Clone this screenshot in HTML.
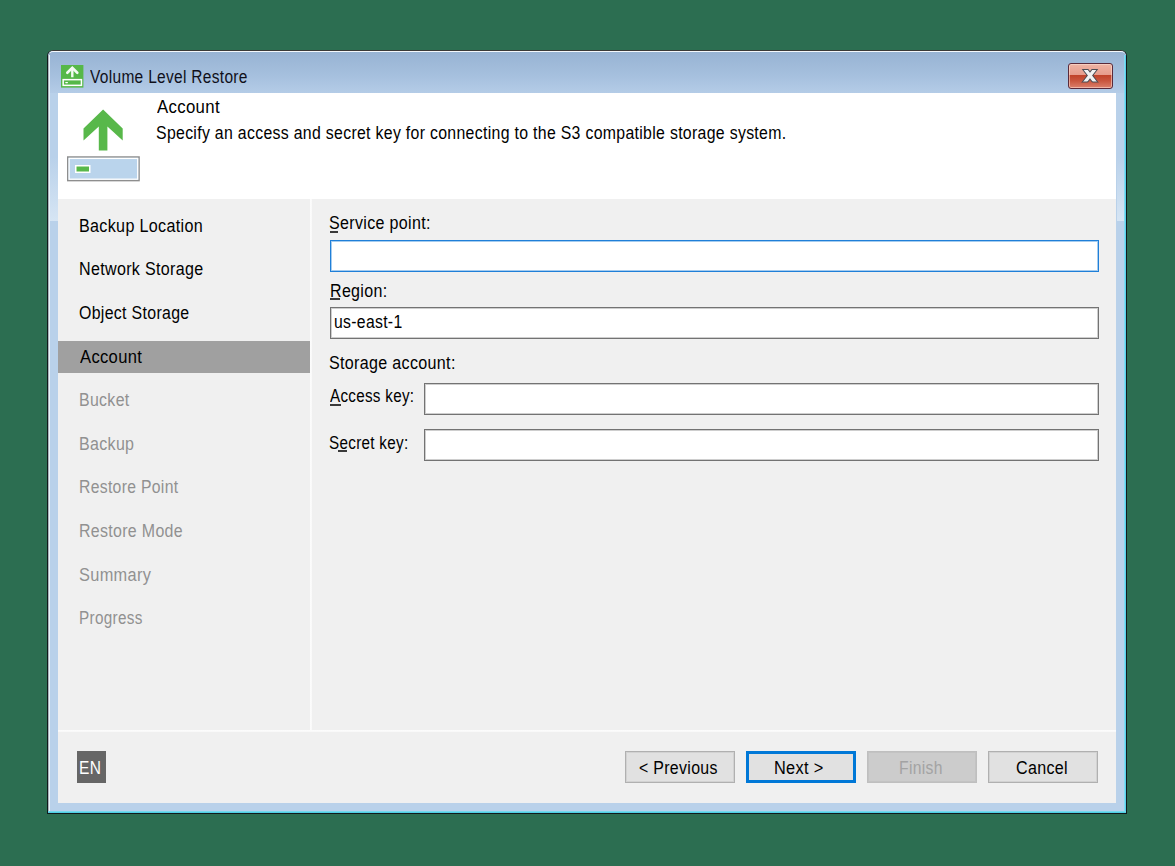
<!DOCTYPE html>
<html><head><meta charset="utf-8">
<style>
*{margin:0;padding:0;box-sizing:border-box}
html,body{width:1175px;height:866px;overflow:hidden;background:#2c6e51;font-family:"Liberation Sans",sans-serif;}
.a{position:absolute}
.t{position:absolute;font-size:17.5px;line-height:20px;white-space:nowrap;color:#000;transform-origin:0 0;letter-spacing:0.35px}
.g{color:#8c8c8c}
#win{left:47px;top:50px;width:1080px;height:764px;border:1px solid #121a1c;border-top-color:#3a3a38;border-radius:6px 6px 0 0;background:#b9d1ea;overflow:hidden}
#hl{left:0;top:0;width:1078px;height:762px;border:1px solid #f4f8fc;border-left-color:#a9b4bc;border-right:none;border-bottom:none;border-radius:5px 5px 0 0}
#hl2{left:1px;top:4px;width:1px;height:758px;background:#eef4fb}
#tb{left:0;top:0;width:1078px;height:42px;background:linear-gradient(#97b3d3,#a6c0de 60%,#b4cce7)}
#content{left:10px;top:42px;width:1058px;height:710px;background:#f0f0f0;overflow:hidden}
#hdr{left:0;top:0;width:1058px;height:106px;background:#fff}
#cyan{left:1076px;top:4px;width:2px;height:758px;background:linear-gradient(90deg,#9fdcf2,#3fd0ea)}
#cyanb{left:0;top:760px;width:1078px;height:2px;background:linear-gradient(#8adcf0,#3ccce0)}
.inp{position:absolute;background:#fff;border:1px solid #737373;box-shadow:inset 0 0 0 1px rgba(115,115,115,0.35)}
.btn{position:absolute;top:658px;width:110px;height:32px;background:#e1e1e1;border:1px solid #b0b0b0;box-shadow:inset 0 0 0 1px rgba(176,176,176,0.3);text-align:center;font-size:16.5px;line-height:30px;color:#000}
</style></head><body>
<div id="win" class="a">
  <div id="tb" class="a"></div>
  <div id="hl" class="a"></div><div id="hl2" class="a"></div>
  <div class="a" style="left:2px;top:106px;width:8px;height:64px;background:linear-gradient(#b9d1ea,#d6e5f4)"></div><div class="a" style="left:1069px;top:106px;width:7px;height:64px;background:linear-gradient(#b9d1ea,#d6e5f4)"></div>
  <div id="cyan" class="a"></div>
  <div id="cyanb" class="a"></div>
  <!-- title icon -->
  <svg class="a" style="left:13px;top:14px" width="23" height="23" viewBox="0 0 23 23">
    <rect x="0" y="0" width="22.4" height="22.6" fill="#56b848"/>
    <polyline points="6.3,7.8 11.3,2.9 16.3,7.8" fill="none" stroke="#f4fbf2" stroke-width="2.6" stroke-linecap="round"/>
    <line x1="11.3" y1="3.5" x2="11.3" y2="12.3" stroke="#f4fbf2" stroke-width="2.4"/>
    <rect x="2.15" y="14.65" width="18.3" height="5.7" fill="none" stroke="#fff" stroke-width="1.5"/>
    <rect x="4.2" y="16.9" width="2.8" height="1.3" rx="0.6" fill="#fff"/>
  </svg>
  <!-- close button -->
  <div class="a" style="left:1020px;top:12px;width:45px;height:26px;border:1px solid #5a2a3a;border-radius:3px;box-shadow:inset 0 0 0 1px rgba(255,225,215,0.55);background:linear-gradient(#eeb4a4,#e69c8c 45%,#bf4128 46%,#c9563e 70%,#dc806c)"></div>
  <svg class="a" style="left:1031px;top:15px" width="22" height="20" viewBox="0 0 22 20">
    <defs><clipPath id="cxo"><rect x="0" y="3" width="22" height="13.4"/></clipPath><clipPath id="cxi"><rect x="0" y="4" width="22" height="11.4"/></clipPath></defs>
    <g clip-path="url(#cxo)"><path d="M3.5 -0.25 L18.5 19.25 M18.5 -0.25 L3.5 19.25" stroke="#4a4d55" stroke-width="5.2" fill="none"/></g>
    <g clip-path="url(#cxi)"><path d="M3.5 -0.25 L18.5 19.25 M18.5 -0.25 L3.5 19.25" stroke="#f2f2f2" stroke-width="3.3" fill="none"/></g>
  </svg>
  <div id="content" class="a">
    <div id="hdr" class="a"></div>
  </div>
</div>
<!-- absolute page coords from here -->
<!-- header icon -->
<svg class="a" style="left:0;top:0" width="200" height="200" viewBox="0 0 200 200">
  <polygon points="103.1,109.5 122.7,128.5 122.7,140.6 107.4,126.5 107.4,150.5 98.8,150.5 98.8,126.5 83.5,140.6 83.5,128.5" fill="#58b84a"/>
  <rect x="67.75" y="157" width="71.3" height="23.6" fill="#bad4ec" stroke="#8e8e8e" stroke-width="1.5"/>
  <rect x="69.1" y="158.4" width="68.6" height="20.8" fill="none" stroke="#fff" stroke-width="1.3"/>
  <rect x="75.75" y="165.75" width="14" height="6.5" fill="#58b84a" stroke="#fff" stroke-width="1.5"/>
</svg>
<!-- nav -->
<div class="a" style="left:58px;top:341px;width:252px;height:32px;background:#a0a0a0"></div>
<div class="a" style="left:310px;top:199px;width:2px;height:532px;background:linear-gradient(90deg,#fdfdfd,#f8f8f8)"></div>
<!-- form -->
<div class="inp" style="left:330px;top:240px;width:769px;height:32px;border-color:#1f7fd8;box-shadow:inset 0 0 0 1px rgba(31,127,216,0.4)"></div>
<div class="inp" style="left:330px;top:307px;width:769px;height:32px"></div>
<div class="inp" style="left:424px;top:383px;width:675px;height:32px"></div>
<div class="inp" style="left:424px;top:429px;width:675px;height:32px"></div>
<div class="a" style="left:330px;top:231px;width:8px;height:2px;background:#3a3a3a"></div>
<div class="a" style="left:330px;top:298px;width:10px;height:2px;background:#3a3a3a"></div>
<div class="a" style="left:330px;top:404px;width:11px;height:2px;background:#3a3a3a"></div>
<div class="a" style="left:338px;top:450px;width:9px;height:2px;background:#3a3a3a"></div>
<!-- footer -->
<div class="a" style="left:58px;top:730px;width:1058px;height:2px;background:linear-gradient(#fdfdfd,#f8f8f8)"></div>
<div class="a" style="left:77px;top:751px;width:29px;height:32px;background:#666"></div>
<div class="btn" style="left:625px;top:751px;text-indent:-1px"></div>
<div class="btn" style="left:746px;top:751px;border:3px solid #0078d7;line-height:26px;text-indent:-7px;box-shadow:none"></div>
<div class="btn" style="left:867px;top:751px;background:#cccccc;border-color:#bfbfbf;color:#a3a3a3"></div>
<div class="btn" style="left:988px;top:751px;text-indent:-3px"></div>
<!--TEXT-->
<div class="t" style="left:89.50px;top:67px;color:#10101a;transform:scaleX(0.8853)">Volume Level Restore</div>
<div class="t" style="left:156.80px;top:97px;color:#000;transform:scaleX(0.9576)">Account</div>
<div class="t" style="left:156.10px;top:123px;color:#000;transform:scaleX(0.9049)">Specify an access and secret key for connecting to the S3 compatible storage system.</div>
<div class="t" style="left:79.08px;top:216px;color:#000;transform:scaleX(0.9211)">Backup Location</div>
<div class="t" style="left:79.08px;top:259px;color:#000;transform:scaleX(0.9179)">Network Storage</div>
<div class="t" style="left:79.09px;top:303px;color:#000;transform:scaleX(0.9083)">Object Storage</div>
<div class="t" style="left:80.00px;top:347px;color:#000;transform:scaleX(0.9470)">Account</div>
<div class="t" style="left:79.09px;top:390px;color:#919191;transform:scaleX(0.9091)">Bucket</div>
<div class="t" style="left:79.08px;top:434px;color:#919191;transform:scaleX(0.9153)">Backup</div>
<div class="t" style="left:79.10px;top:477px;color:#919191;transform:scaleX(0.8991)">Restore Point</div>
<div class="t" style="left:79.09px;top:521px;color:#919191;transform:scaleX(0.9107)">Restore Mode</div>
<div class="t" style="left:79.07px;top:565px;color:#919191;transform:scaleX(0.9342)">Summary</div>
<div class="t" style="left:79.13px;top:608px;color:#919191;transform:scaleX(0.8732)">Progress</div>
<div class="t" style="left:329.08px;top:213px;color:#000;transform:scaleX(0.9167)">Service point:</div>
<div class="t" style="left:329.58px;top:281px;color:#000;transform:scaleX(0.9150)">Region:</div>
<div class="t" style="left:334.10px;top:312px;color:#000;transform:scaleX(0.9000)">us-east-1</div>
<div class="t" style="left:329.08px;top:353px;color:#000;transform:scaleX(0.9185)">Storage account:</div>
<div class="t" style="left:330.00px;top:386px;color:#000;transform:scaleX(0.8677)">Access key:</div>
<div class="t" style="left:329.13px;top:433px;color:#000;transform:scaleX(0.8697)">Secret key:</div>
<div class="t" style="left:79.11px;top:758px;color:#fff;transform:scaleX(0.8870)">EN</div>
<div class="t" style="left:639.49px;top:758px;color:#000;transform:scaleX(0.9082)">&lt; Previous</div>
<div class="t" style="left:773.67px;top:758px;color:#000;transform:scaleX(0.9333)">Next &gt;</div>
<div class="t" style="left:898.90px;top:758px;color:#a3a3a3;transform:scaleX(0.8979)">Finish</div>
<div class="t" style="left:1015.68px;top:758px;color:#000;transform:scaleX(0.9185)">Cancel</div>
<!--/TEXT-->
</body></html>
